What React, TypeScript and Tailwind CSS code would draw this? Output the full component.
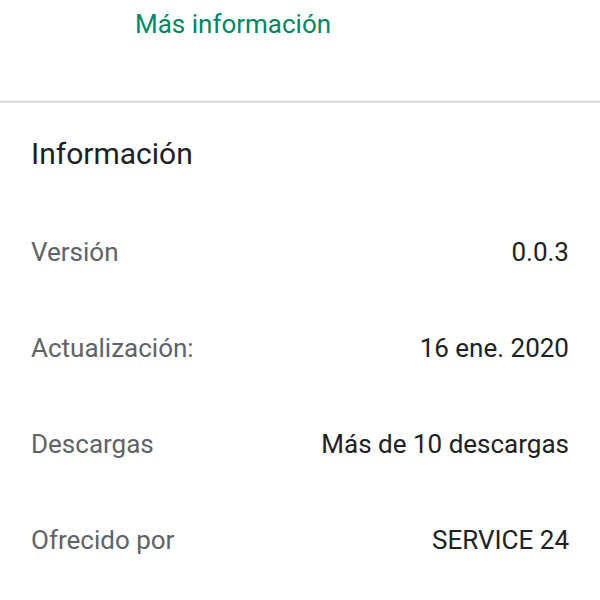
import React from 'react';

const rows = [
  { label: 'Versión', value: '0.0.3' },
  { label: 'Actualización:', value: '16 ene. 2020' },
  { label: 'Descargas', value: 'Más de 10 descargas' },
  { label: 'Ofrecido por', value: 'SERVICE 24' },
];

const App: React.FC = () => {
  return (
    <div className="w-[600px] h-[600px] bg-white overflow-hidden" style={{ fontFamily: 'Roboto, "Noto Sans", sans-serif' }}>
      <div className="h-[100px] pl-[135px]">
        <div className="h-[48px] flex items-center text-[26px] text-[#01875f]">Más información</div>
      </div>
      <div className="h-[1px] bg-[#f3f3f3]" />
      <div className="h-[2px] bg-[#dcdcdc]" />
      <div className="px-[31px]">
        <h2 className="h-[101px] flex items-center text-[30px] text-[#202124]">Información</h2>
        {rows.map((row) => (
          <div key={row.label} className="h-[96px] flex items-center justify-between text-[26px]">
            <span className="text-[#5f6368]">{row.label}</span>
            <span className="text-[#202124]">{row.value}</span>
          </div>
        ))}
      </div>
    </div>
  );
};

export default App;
